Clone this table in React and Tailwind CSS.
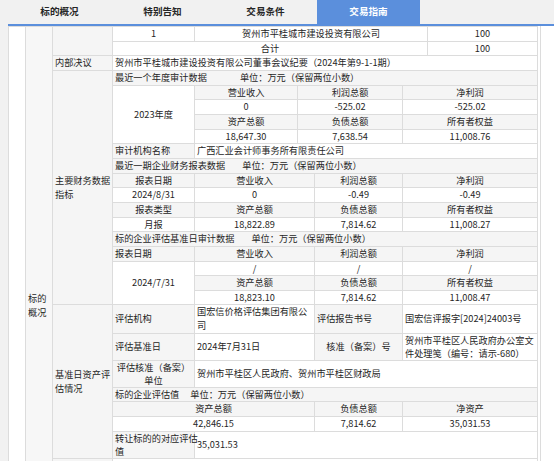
import React from "react";

const tabs = ["标的概况", "特别告知", "交易条件", "交易指南"];

const base = "border border-[#dcdcdc] px-[2px] py-0 align-middle whitespace-nowrap";

function C({ children, gray, left, className = "", ...rest }) {
  return (
    <td
      className={`${base} ${gray ? "bg-[#f5f5f5]" : "bg-white"} ${left ? "text-left" : "text-center"} ${className}`}
      {...rest}
    >
      {children}
    </td>
  );
}

function Unit({ title, gap }) {
  return (
    <C gray left colSpan={6}>
      {title}
      <span className={gap}>单位：万元（保留两位小数）</span>
    </C>
  );
}

export default function App() {
  return (
    <div
      className="flex h-[461px] w-[554px] overflow-hidden bg-white text-[9.2px] leading-[13.65px] text-[#262626]"
      style={{ fontFamily: '"Noto Sans CJK SC", "Noto Sans", sans-serif' }}
    >
      <div className="w-[8px] shrink-0 bg-[#f1f1f1]" />
      <div className="flex flex-1 flex-col">
        <div className="flex h-[26px] shrink-0 border-b-2 border-[#5b8fdc] bg-[#f1f1f1]">
          {tabs.map((t, i) => (
            <div
              key={t}
              className={`flex w-[103px] items-center justify-center text-[9.6px] font-bold ${
                i === 3 ? "bg-[#5b8fdc] text-white" : "text-[#262626]"
              }`}
            >
              {t}
            </div>
          ))}
        </div>

        <div className="flex">
          <table className="w-[529px] table-fixed border-collapse">
            <colgroup>
              <col className="w-[17px]" />
              <col className="w-[27px]" />
              <col className="w-[60px]" />
              <col className="w-[82px]" />
              <col className="w-[103px]" />
              <col className="w-[17px]" />
              <col className="w-[88px]" />
              <col className="w-[25px]" />
              <col className="w-[110px]" />
            </colgroup>
            <tbody>
              <tr>
                <C rowSpan={27} />
                <C gray left rowSpan={27} className="bg-[#f7f7f7]">
                  标的
                  <br />
                  概况
                </C>
                <C gray rowSpan={2} />
                <C>1</C>
                <C colSpan={4}>贺州市平桂城市建设投资有限公司</C>
                <C>100</C>
              </tr>
              <tr>
                <C colSpan={5}>合计</C>
                <C>100</C>
              </tr>
              <tr>
                <C gray left>内部决议</C>
                <C left colSpan={6}>
                  贺州市平桂城市建设投资有限公司董事会议纪要（2024年第9-1-1期）
                </C>
              </tr>

              <tr>
                <C gray left rowSpan={16}>
                  主要财务数据
                  <br />
                  指标
                </C>
                <Unit title="最近一个年度审计数据" gap="ml-[33px]" />
              </tr>
              <tr>
                <C rowSpan={4}>2023年度</C>
                <C gray>营业收入</C>
                <C gray colSpan={2}>利润总额</C>
                <C gray colSpan={2}>净利润</C>
              </tr>
              <tr>
                <C>0</C>
                <C colSpan={2}>-525.02</C>
                <C colSpan={2}>-525.02</C>
              </tr>
              <tr>
                <C gray>资产总额</C>
                <C gray colSpan={2}>负债总额</C>
                <C gray colSpan={2}>所有者权益</C>
              </tr>
              <tr>
                <C>18,647.30</C>
                <C colSpan={2}>7,638.54</C>
                <C colSpan={2}>11,008.76</C>
              </tr>
              <tr>
                <C gray left>审计机构名称</C>
                <C left colSpan={5}>广西汇业会计师事务所有限责任公司</C>
              </tr>
              <tr>
                <Unit title="最近一期企业财务报表数据" gap="ml-[17px]" />
              </tr>
              <tr>
                <C gray>报表日期</C>
                <C gray colSpan={2}>营业收入</C>
                <C gray>利润总额</C>
                <C gray colSpan={2}>净利润</C>
              </tr>
              <tr>
                <C>2024/8/31</C>
                <C colSpan={2}>0</C>
                <C>-0.49</C>
                <C colSpan={2}>-0.49</C>
              </tr>
              <tr>
                <C gray>报表类型</C>
                <C gray colSpan={2}>资产总额</C>
                <C gray>负债总额</C>
                <C gray colSpan={2}>所有者权益</C>
              </tr>
              <tr>
                <C>月报</C>
                <C colSpan={2}>18,822.89</C>
                <C>7,814.62</C>
                <C colSpan={2}>11,008.27</C>
              </tr>
              <tr>
                <Unit title="标的企业评估基准日审计数据" gap="ml-[17px]" />
              </tr>
              <tr>
                <C gray left>报表日期</C>
                <C gray colSpan={2}>营业收入</C>
                <C gray>利润总额</C>
                <C gray colSpan={2}>净利润</C>
              </tr>
              <tr>
                <C rowSpan={3}>2024/7/31</C>
                <C colSpan={2}>/</C>
                <C>/</C>
                <C colSpan={2}>/</C>
              </tr>
              <tr>
                <C gray colSpan={2}>资产总额</C>
                <C gray>负债总额</C>
                <C gray colSpan={2}>所有者权益</C>
              </tr>
              <tr>
                <C colSpan={2}>18,823.10</C>
                <C>7,814.62</C>
                <C colSpan={2}>11,008.47</C>
              </tr>

              <tr>
                <C gray left rowSpan={7}>
                  基准日资产评
                  <br />
                  估情况
                </C>
                <C gray left>评估机构</C>
                <C left colSpan={2} className="leading-[13.6px]">
                  国宏信价格评估集团有限公
                  <br />司
                </C>
                <C gray left>评估报告书号</C>
                <C left colSpan={2}>国宏信评报字[2024]24003号</C>
              </tr>
              <tr>
                <C gray left>评估基准日</C>
                <C left colSpan={2}>2024年7月31日</C>
                <C gray>核准（备案）号</C>
                <C left colSpan={2} className="leading-[13px]">
                  贺州市平桂区人民政府办公室文
                  <br />
                  件处理笺（编号：请示-680）
                </C>
              </tr>
              <tr>
                <C gray className="leading-[13px]">
                  评估核准（备案）
                  <br />
                  单位
                </C>
                <C left colSpan={5}>贺州市平桂区人民政府、贺州市平桂区财政局</C>
              </tr>
              <tr>
                <Unit title="标的企业评估值" gap="ml-[11px]" />
              </tr>
              <tr>
                <C gray colSpan={3}>资产总额</C>
                <C gray>负债总额</C>
                <C gray colSpan={2}>净资产</C>
              </tr>
              <tr>
                <C colSpan={3}>42,846.15</C>
                <C>7,814.62</C>
                <C colSpan={2}>35,031.53</C>
              </tr>
              <tr>
                <C gray left className="leading-[13.4px]">
                  转让标的的对应评估
                  <br />值
                </C>
                <C left colSpan={5}>35,031.53</C>
              </tr>
              <tr className="h-[126px]">
                <C gray />
                <C colSpan={6} />
              </tr>
            </tbody>
          </table>
          <div className="w-[3px] shrink-0 border-r border-[#dcdcdc]" />
        </div>
      </div>
    </div>
  );
}
